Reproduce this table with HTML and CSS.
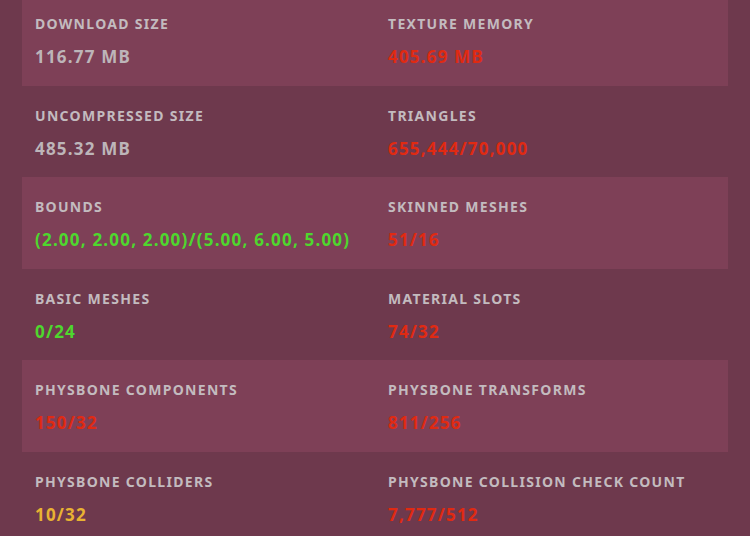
FILE: index.html
```html
<!DOCTYPE html>
<html>
<head>
<meta charset="utf-8">
<link rel="stylesheet" href="styles.css">
</head>
<body>
<div class="list">
  <div class="row band">
    <div class="cell"><div class="label">Download Size</div><div class="value gray">116.77 MB</div></div>
    <div class="cell"><div class="label">Texture Memory</div><div class="value red">405.69 MB</div></div>
  </div>
  <div class="row">
    <div class="cell"><div class="label">Uncompressed Size</div><div class="value gray">485.32 MB</div></div>
    <div class="cell"><div class="label">Triangles</div><div class="value red">655,444/70,000</div></div>
  </div>
  <div class="row band">
    <div class="cell"><div class="label">Bounds</div><div class="value green">(2.00, 2.00, 2.00)/(5.00, 6.00, 5.00)</div></div>
    <div class="cell"><div class="label">Skinned Meshes</div><div class="value red">51/16</div></div>
  </div>
  <div class="row">
    <div class="cell"><div class="label">Basic Meshes</div><div class="value green">0/24</div></div>
    <div class="cell"><div class="label">Material Slots</div><div class="value red">74/32</div></div>
  </div>
  <div class="row band">
    <div class="cell"><div class="label">PhysBone Components</div><div class="value red">150/32</div></div>
    <div class="cell"><div class="label">PhysBone Transforms</div><div class="value red">811/256</div></div>
  </div>
  <div class="row">
    <div class="cell"><div class="label">PhysBone Colliders</div><div class="value yellow">10/32</div></div>
    <div class="cell"><div class="label">PhysBone Collision Check Count</div><div class="value red">7,777/512</div></div>
  </div>
</div>
</body>
</html>
```
FILE: styles.css
```css
html, body {
  margin: 0;
  padding: 0;
  background: #6e394d;
  overflow: hidden;
}
body {
  font-family: "Noto Sans", "Open Sans", sans-serif;
}
.list {
  margin: -6px 22px 0 22px;
}
.row {
  display: grid;
  grid-template-columns: 1fr 1fr;
  height: 91.6px;
  box-sizing: border-box;
  padding-top: 20px;
}
.band {
  background: #7e4057;
}
.cell {
  padding-left: 13px;
}
.label {
  text-transform: uppercase;
  font-size: 14px;
  font-weight: 700;
  letter-spacing: 1.3px;
  color: #c3bbbf;
  line-height: 19px;
}
.value {
  margin-top: 12px;
  font-size: 17px;
  font-weight: 700;
  letter-spacing: 1.2px;
  line-height: 23px;
}
.gray { color: #bdb5b9; }
.red { color: #e02a12; }
.green { color: #4ed72e; }
.yellow { color: #e8b232; }
```
